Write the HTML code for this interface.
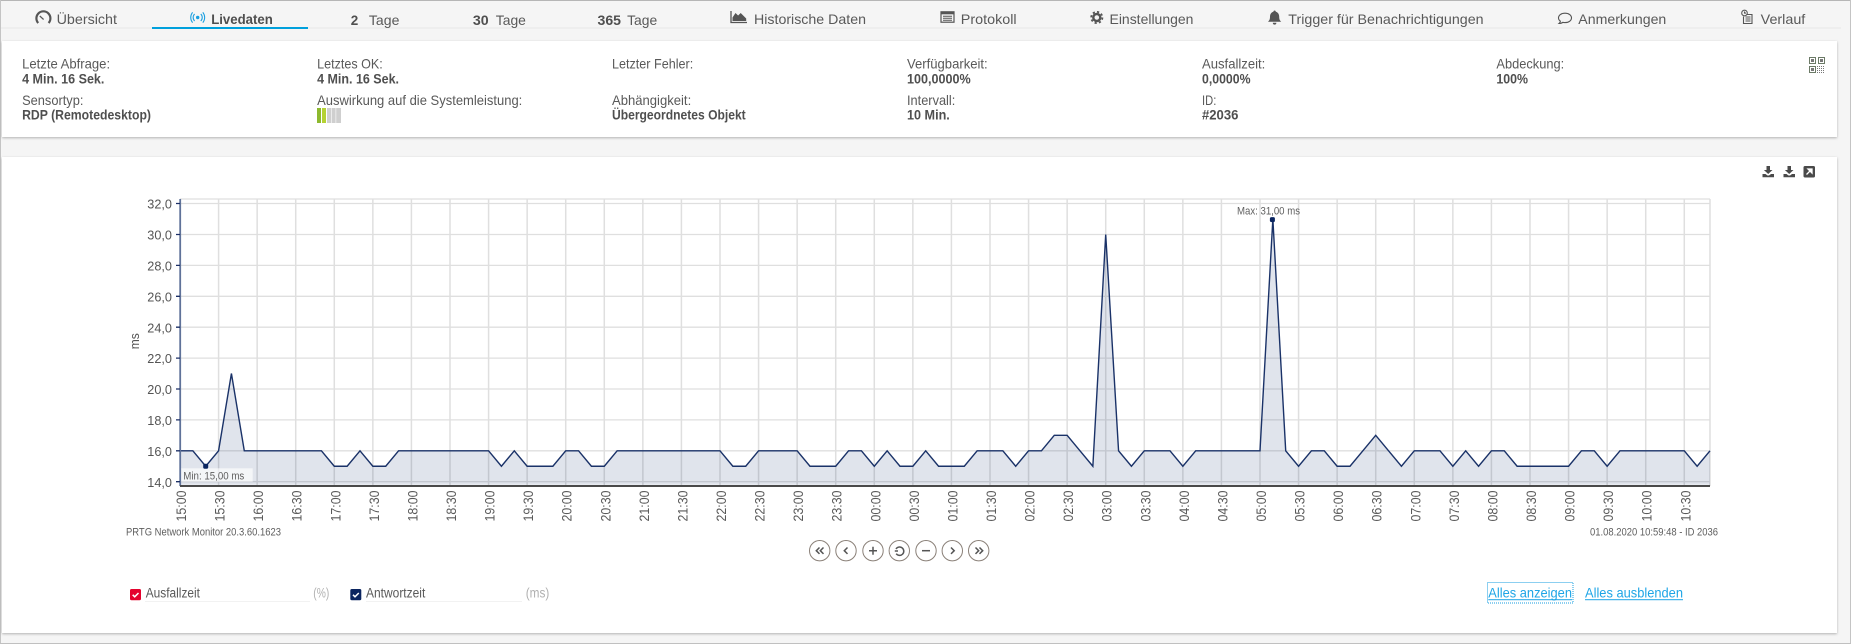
<!DOCTYPE html>
<html lang="de">
<head>
<meta charset="utf-8">
<title>Livedaten</title>
<style>
html,body{margin:0;padding:0;background:#f5f5f5;width:1851px;height:644px;overflow:hidden}
svg{display:block}
text{font-family:"Liberation Sans",sans-serif;font-size:14px;fill:#595959}
.b{font-weight:bold;fill:#4f4f4f}
.c{font-size:13.5px;fill:#5a5a5a}
.y{font-size:12.8px;fill:#555}
.s{font-size:11px;fill:#5f5f5f}
.l{fill:#1ea5e6}
.g{fill:#b0b0b0}
</style>
</head>
<body>
<svg xmlns="http://www.w3.org/2000/svg" width="1851" height="644" viewBox="0 0 1851 644">
<defs>
<filter id="sh" x="-2%" y="-5%" width="104%" height="110%"><feDropShadow dx="0" dy="1" stdDeviation="1.2" flood-color="#000" flood-opacity=".28"/></filter>
</defs>
<rect width="1851" height="644" fill="#f5f5f5"/>
<rect x="0" y="0" width="1851" height="1" fill="#b6b6b6"/>
<rect x="0" y="0" width="1" height="644" fill="#c4c4c4"/>
<rect x="1850" y="0" width="1" height="644" fill="#c4c4c4"/>
<rect x="0" y="643" width="1851" height="1" fill="#c0c0c0"/>

<!-- tabs -->
<rect x="1" y="27" width="1840" height="2" fill="#eeeeee"/>
<rect x="152" y="27" width="156" height="2" fill="#00a0dc"/>
<g>
<text x="56.6" y="24" textLength="60.4" lengthAdjust="spacingAndGlyphs">Übersicht</text>
<text class="b" x="211.2" y="24" textLength="61.6" lengthAdjust="spacingAndGlyphs">Livedaten</text>
<text class="b" x="350.7" y="25" textLength="7.5" lengthAdjust="spacingAndGlyphs">2</text>
<text x="368.9" y="25" textLength="30.5" lengthAdjust="spacingAndGlyphs">Tage</text>
<text class="b" x="472.9" y="25" textLength="15.8" lengthAdjust="spacingAndGlyphs">30</text>
<text x="495.8" y="25" textLength="30.1" lengthAdjust="spacingAndGlyphs">Tage</text>
<text class="b" x="597.5" y="25" textLength="23.5" lengthAdjust="spacingAndGlyphs">365</text>
<text x="627.1" y="25" textLength="30.1" lengthAdjust="spacingAndGlyphs">Tage</text>
<text x="754" y="24" textLength="112" lengthAdjust="spacingAndGlyphs">Historische Daten</text>
<text x="960.8" y="24" textLength="55.8" lengthAdjust="spacingAndGlyphs">Protokoll</text>
<text x="1109.5" y="24" textLength="83.9" lengthAdjust="spacingAndGlyphs">Einstellungen</text>
<text x="1288.3" y="24" textLength="195.3" lengthAdjust="spacingAndGlyphs">Trigger für Benachrichtigungen</text>
<text x="1578.3" y="24" textLength="88" lengthAdjust="spacingAndGlyphs">Anmerkungen</text>
<text x="1760.7" y="24" textLength="44.6" lengthAdjust="spacingAndGlyphs">Verlauf</text>
</g>

<!-- tab icons -->
<g fill="none" stroke="#555">
<path d="M38.2 23a7 7 0 1 1 10.4 0" stroke-width="2.2"/>
<path d="M43.6 19.5L39.8 16" stroke-width="1.2"/>
</g>
<g fill="none" stroke="#1a9fe0" stroke-width="1.1">
<circle cx="197.7" cy="17.5" r="1.7" fill="#1a9fe0" stroke="none"/>
<path d="M194.6 14a5 5 0 0 0 0 7M200.8 14a5 5 0 0 1 0 7"/>
<path d="M192.6 12.4a8 8 0 0 0 0 10.2M202.8 12.4a8 8 0 0 1 0 10.2"/>
</g>
<path d="M731 11v11.5h16" fill="none" stroke="#555" stroke-width="1.3"/>
<path d="M732.5 21v-3.5l3-4.5 2.6 2.5 2.6-2.5 3 3 2.5 2.5V21z" fill="#555"/>
<g>
<rect x="941" y="11.8" width="13" height="10.4" fill="none" stroke="#555" stroke-width="1.2"/>
<rect x="941" y="11.8" width="13" height="2.5" fill="#555"/>
<path d="M943 16.2h9M943 18.2h9M943 20.2h9" stroke="#555" stroke-width="1"/>
</g>
<g>
<circle cx="1096.8" cy="17.5" r="5.6" fill="none" stroke="#555" stroke-width="1.8" stroke-dasharray="2.2 2.2"/>
<circle cx="1096.8" cy="17.5" r="3.5" fill="none" stroke="#555" stroke-width="2.4"/>
</g>
<path d="M1274.6 10.5c.7 0 1.2.5 1.2 1.2 2.4.6 3.4 2.7 3.4 5 0 2.5.6 3.7 2 5H1268c1.4-1.3 2-2.500 2-5 0-2.300 1-4.400 3.400-5 0-.7.500-1.200 1.200-1.200zM1272.800 22.800h3.600a1.800 1.800 0 0 1-3.600 0z" fill="#555"/>
<path d="M1565 13.200c3.700 0 6.500 2 6.500 4.700s-2.800 4.700-6.500 4.700c-.8 0-1.500-.1-2.200-.3-.9.8-2.200 1.200-3.800 1.200.8-.7 1.300-1.500 1.400-2.300-1.200-.8-1.900-2-1.900-3.300 0-2.700 2.800-4.700 6.500-4.700z" fill="none" stroke="#555" stroke-width="1.1"/>
<g fill="none" stroke="#555" stroke-width="1.1">
<path d="M1744.500 14.500h7.500v9h-8.500v-7"/>
<circle cx="1744.500" cy="13" r="2.800" fill="#f5f5f5"/>
<path d="M1744.500 11.500v1.600h1.500M1745.500 17h5M1745.500 19h5M1745.500 21h5"/>
</g>

<!-- info panel -->
<rect x="2" y="41" width="1835" height="96" fill="#fff" filter="url(#sh)"/>
<text x="22.1" y="68.600" textLength="88" lengthAdjust="spacingAndGlyphs">Letzte Abfrage:</text>
<text class="b" x="22.1" y="83.7" textLength="82.3" lengthAdjust="spacingAndGlyphs">4 Min. 16 Sek.</text>
<text x="22.1" y="104.900" textLength="61.3" lengthAdjust="spacingAndGlyphs">Sensortyp:</text>
<text class="b" x="22.1" y="119.7" textLength="128.9" lengthAdjust="spacingAndGlyphs">RDP (Remotedesktop)</text>
<text x="317.100" y="68.600" textLength="65.700" lengthAdjust="spacingAndGlyphs">Letztes OK:</text>
<text class="b" x="317.100" y="83.7" textLength="81.900" lengthAdjust="spacingAndGlyphs">4 Min. 16 Sek.</text>
<text x="317.100" y="104.900" textLength="205.200" lengthAdjust="spacingAndGlyphs">Auswirkung auf die Systemleistung:</text>
<rect x="317" y="108" width="4" height="15" fill="#8db92e"/>
<rect x="322" y="108" width="4" height="15" fill="#b5d233"/>
<rect x="327" y="108" width="4" height="15" fill="#cfcfcf"/>
<rect x="331.600" y="108" width="4" height="15" fill="#cfcfcf"/>
<rect x="336.200" y="108" width="4.800" height="15" fill="#cfcfcf"/>
<text x="612" y="68.600" textLength="81.200" lengthAdjust="spacingAndGlyphs">Letzter Fehler:</text>
<text x="612" y="104.900" textLength="79.200" lengthAdjust="spacingAndGlyphs">Abhängigkeit:</text>
<text class="b" x="612" y="119.7" textLength="133.700" lengthAdjust="spacingAndGlyphs">Übergeordnetes Objekt</text>
<text x="907" y="68.600" textLength="80.700" lengthAdjust="spacingAndGlyphs">Verfügbarkeit:</text>
<text class="b" x="907" y="83.7" textLength="63.700" lengthAdjust="spacingAndGlyphs">100,0000%</text>
<text x="907" y="104.900" textLength="48.300" lengthAdjust="spacingAndGlyphs">Intervall:</text>
<text class="b" x="907" y="119.7" textLength="42.800" lengthAdjust="spacingAndGlyphs">10 Min.</text>
<text x="1202" y="68.600" textLength="63.300" lengthAdjust="spacingAndGlyphs">Ausfallzeit:</text>
<text class="b" x="1202" y="83.7" textLength="48.500" lengthAdjust="spacingAndGlyphs">0,0000%</text>
<text x="1202" y="104.900" textLength="14.300" lengthAdjust="spacingAndGlyphs">ID:</text>
<text class="b" x="1202" y="119.7" textLength="36.400" lengthAdjust="spacingAndGlyphs">#2036</text>
<text x="1496.400" y="68.600" textLength="67.800" lengthAdjust="spacingAndGlyphs">Abdeckung:</text>
<text class="b" x="1496.400" y="83.7" textLength="31.600" lengthAdjust="spacingAndGlyphs">100%</text>
<!-- QR -->
<g fill="none" stroke="#6b7a66" stroke-width="1">
<rect x="1809.500" y="57.500" width="6" height="6"/>
<rect x="1818.500" y="57.500" width="6" height="6"/>
<rect x="1809.500" y="66.500" width="6" height="6"/>
<path d="M1817 66.500h8M1817 68.500h8M1817 70.500h8M1817 72.500h8" stroke="#777" stroke-dasharray="1 1"/>
</g>
<g fill="#777"><rect x="1811" y="59" width="3" height="3"/><rect x="1820" y="59" width="3" height="3"/><rect x="1811" y="68" width="3" height="3"/></g>

<!-- chart panel -->
<rect x="2" y="157" width="1835" height="476" fill="#fff" filter="url(#sh)"/>
<g fill="#4a4a4a">
<path d="M1766.500 166h3.500v4h2.500l-4.300 4-4.300-4h2.600z"/><path d="M1762.500 174h3l2 1.500h1.500l2-1.500h3v3.200h-11.500z"/>
<path d="M1787.500 166h3.500v4h2.500l-4.300 4-4.300-4h2.600z"/><path d="M1783.500 174h3l2 1.500h1.500l2-1.500h3v3.200h-11.500z"/>
<rect x="1803.500" y="166" width="11.500" height="11.500" rx="1.500"/>
</g>
<path d="M1806.500 174.500l5-5M1808 169h4v4z" stroke="#fff" stroke-width="1.300" fill="#fff"/>

<!-- grid -->
<g stroke="#dfdfdf" stroke-width="1.300">
<path d="M180 199H1710" stroke="#e8e8e8" stroke-width="1.800"/>
<path d="M180 203.500H1710M180 234.500H1710M180 265.400H1710M180 296.300H1710M180 327.200H1710M180 358.100H1710M180 389H1710M180 419.900H1710M180 450.800H1710M180 481.700H1710"/>
<g transform="translate(180,0) scale(12.8571,1)">
<path vector-effect="non-scaling-stroke" d="M3 199V486M6 199V486M9 199V486M12 199V486M15 199V486M18 199V486M21 199V486M24 199V486M27 199V486M30 199V486M33 199V486M36 199V486M39 199V486M42 199V486M45 199V486M48 199V486M51 199V486M54 199V486M57 199V486M60 199V486M63 199V486M66 199V486M69 199V486M72 199V486M75 199V486M78 199V486M81 199V486M84 199V486M87 199V486M90 199V486M93 199V486M96 199V486M99 199V486M102 199V486M105 199V486M108 199V486M111 199V486M114 199V486M117 199V486M119 199V486" stroke-width="1.500"/>
</g>
</g>

<!-- series -->
<g transform="translate(180,698) scale(12.8571,-15.45)">
<polygon fill="#002060" fill-opacity=".12" points="0,13.8 0,16 1,16 2,15 3,16 4,21 5,16 11,16 12,15 13,15 14,16 15,15 16,15 17,16 24,16 25,15 26,16 27,15 29,15 30,16 31,16 32,15 33,15 34,16 42,16 43,15 44,15 45,16 48,16 49,15 51,15 52,16 53,16 54,15 55,16 56,15 57,15 58,16 59,15 61,15 62,16 64,16 65,15 66,16 67,16 68,17 69,17 70,16 71,15 72,30 73,16 74,15 75,16 77,16 78,15 79,16 84,16 85,31 86,16 87,15 88,16 89,16 90,15 91,15 92,16 93,17 94,16 95,15 96,16 98,16 99,15 100,16 101,15 102,16 103,16 104,15 108,15 109,16 110,16 111,15 112,16 117,16 118,15 119,16 119,13.8"/>
<polyline fill="none" stroke="#1a3268" stroke-width="1.400" vector-effect="non-scaling-stroke" points="0,16 1,16 2,15 3,16 4,21 5,16 11,16 12,15 13,15 14,16 15,15 16,15 17,16 24,16 25,15 26,16 27,15 29,15 30,16 31,16 32,15 33,15 34,16 42,16 43,15 44,15 45,16 48,16 49,15 51,15 52,16 53,16 54,15 55,16 56,15 57,15 58,16 59,15 61,15 62,16 64,16 65,15 66,16 67,16 68,17 69,17 70,16 71,15 72,30 73,16 74,15 75,16 77,16 78,15 79,16 84,16 85,31 86,16 87,15 88,16 89,16 90,15 91,15 92,16 93,17 94,16 95,15 96,16 98,16 99,15 100,16 101,15 102,16 103,16 104,15 108,15 109,16 110,16 111,15 112,16 117,16 118,15 119,16"/>
</g>
<rect x="180" y="468.300" width="72.700" height="13.400" fill="#fff" fill-opacity=".65"/>
<rect x="179.300" y="199" width="1.800" height="287" fill="#5f7299"/>
<rect x="180" y="485" width="1530" height="2" fill="#4a4a4a"/>
<g stroke="#1b2f66" stroke-width="1.300">
<path d="M176 203.500h4M176 234.500h4M176 265.400h4M176 296.300h4M176 327.200h4M176 358.100h4M176 389h4M176 419.900h4M176 450.800h4M176 481.700h4"/>
</g>
<rect x="203.200" y="463.800" width="5" height="5" rx="1.500" fill="#0a2560"/>
<rect x="1269.900" y="217.100" width="5" height="5" rx="1.500" fill="#0a2560"/>
<text class="s" x="183.300" y="479.300" textLength="61" lengthAdjust="spacingAndGlyphs">Min: 15,00 ms</text>
<text class="s" x="1237" y="214.700" textLength="63" lengthAdjust="spacingAndGlyphs">Max: 31,00 ms</text>

<!-- y labels -->
<g>
<text class="y" x="147.300" y="208.700" textLength="24.700" lengthAdjust="spacingAndGlyphs">32,0</text>
<text class="y" x="147.300" y="239.600" textLength="24.700" lengthAdjust="spacingAndGlyphs">30,0</text>
<text class="y" x="147.300" y="270.500" textLength="24.700" lengthAdjust="spacingAndGlyphs">28,0</text>
<text class="y" x="147.300" y="301.400" textLength="24.700" lengthAdjust="spacingAndGlyphs">26,0</text>
<text class="y" x="147.300" y="332.300" textLength="24.700" lengthAdjust="spacingAndGlyphs">24,0</text>
<text class="y" x="147.300" y="363.200" textLength="24.700" lengthAdjust="spacingAndGlyphs">22,0</text>
<text class="y" x="147.300" y="394.100" textLength="24.700" lengthAdjust="spacingAndGlyphs">20,0</text>
<text class="y" x="147.300" y="425" textLength="24.700" lengthAdjust="spacingAndGlyphs">18,0</text>
<text class="y" x="147.300" y="455.900" textLength="24.700" lengthAdjust="spacingAndGlyphs">16,0</text>
<text class="y" x="147.300" y="486.800" textLength="24.700" lengthAdjust="spacingAndGlyphs">14,0</text>
</g>
<text class="y" transform="translate(139,349.300) rotate(-90)" x="0" y="0" textLength="16" lengthAdjust="spacingAndGlyphs">ms</text>

<!-- x labels -->
<g>
<text class="c" transform="translate(186,521.500) rotate(-90)" textLength="31" lengthAdjust="spacingAndGlyphs">15:00</text>
<text class="c" transform="translate(224.600,521.500) rotate(-90)" textLength="31" lengthAdjust="spacingAndGlyphs">15:30</text>
<text class="c" transform="translate(263.100,521.500) rotate(-90)" textLength="31" lengthAdjust="spacingAndGlyphs">16:00</text>
<text class="c" transform="translate(301.700,521.500) rotate(-90)" textLength="31" lengthAdjust="spacingAndGlyphs">16:30</text>
<text class="c" transform="translate(340.300,521.500) rotate(-90)" textLength="31" lengthAdjust="spacingAndGlyphs">17:00</text>
<text class="c" transform="translate(378.900,521.500) rotate(-90)" textLength="31" lengthAdjust="spacingAndGlyphs">17:30</text>
<text class="c" transform="translate(417.400,521.500) rotate(-90)" textLength="31" lengthAdjust="spacingAndGlyphs">18:00</text>
<text class="c" transform="translate(456,521.500) rotate(-90)" textLength="31" lengthAdjust="spacingAndGlyphs">18:30</text>
<text class="c" transform="translate(494.600,521.500) rotate(-90)" textLength="31" lengthAdjust="spacingAndGlyphs">19:00</text>
<text class="c" transform="translate(533.100,521.500) rotate(-90)" textLength="31" lengthAdjust="spacingAndGlyphs">19:30</text>
<text class="c" transform="translate(571.700,521.500) rotate(-90)" textLength="31" lengthAdjust="spacingAndGlyphs">20:00</text>
<text class="c" transform="translate(610.300,521.500) rotate(-90)" textLength="31" lengthAdjust="spacingAndGlyphs">20:30</text>
<text class="c" transform="translate(648.900,521.500) rotate(-90)" textLength="31" lengthAdjust="spacingAndGlyphs">21:00</text>
<text class="c" transform="translate(687.400,521.500) rotate(-90)" textLength="31" lengthAdjust="spacingAndGlyphs">21:30</text>
<text class="c" transform="translate(726,521.500) rotate(-90)" textLength="31" lengthAdjust="spacingAndGlyphs">22:00</text>
<text class="c" transform="translate(764.600,521.500) rotate(-90)" textLength="31" lengthAdjust="spacingAndGlyphs">22:30</text>
<text class="c" transform="translate(803.100,521.500) rotate(-90)" textLength="31" lengthAdjust="spacingAndGlyphs">23:00</text>
<text class="c" transform="translate(841.700,521.500) rotate(-90)" textLength="31" lengthAdjust="spacingAndGlyphs">23:30</text>
<text class="c" transform="translate(880.300,521.500) rotate(-90)" textLength="31" lengthAdjust="spacingAndGlyphs">00:00</text>
<text class="c" transform="translate(918.900,521.500) rotate(-90)" textLength="31" lengthAdjust="spacingAndGlyphs">00:30</text>
<text class="c" transform="translate(957.400,521.500) rotate(-90)" textLength="31" lengthAdjust="spacingAndGlyphs">01:00</text>
<text class="c" transform="translate(996,521.500) rotate(-90)" textLength="31" lengthAdjust="spacingAndGlyphs">01:30</text>
<text class="c" transform="translate(1034.600,521.500) rotate(-90)" textLength="31" lengthAdjust="spacingAndGlyphs">02:00</text>
<text class="c" transform="translate(1073.100,521.500) rotate(-90)" textLength="31" lengthAdjust="spacingAndGlyphs">02:30</text>
<text class="c" transform="translate(1111.700,521.500) rotate(-90)" textLength="31" lengthAdjust="spacingAndGlyphs">03:00</text>
<text class="c" transform="translate(1150.300,521.500) rotate(-90)" textLength="31" lengthAdjust="spacingAndGlyphs">03:30</text>
<text class="c" transform="translate(1188.900,521.500) rotate(-90)" textLength="31" lengthAdjust="spacingAndGlyphs">04:00</text>
<text class="c" transform="translate(1227.400,521.500) rotate(-90)" textLength="31" lengthAdjust="spacingAndGlyphs">04:30</text>
<text class="c" transform="translate(1266,521.500) rotate(-90)" textLength="31" lengthAdjust="spacingAndGlyphs">05:00</text>
<text class="c" transform="translate(1304.600,521.500) rotate(-90)" textLength="31" lengthAdjust="spacingAndGlyphs">05:30</text>
<text class="c" transform="translate(1343.100,521.500) rotate(-90)" textLength="31" lengthAdjust="spacingAndGlyphs">06:00</text>
<text class="c" transform="translate(1381.700,521.500) rotate(-90)" textLength="31" lengthAdjust="spacingAndGlyphs">06:30</text>
<text class="c" transform="translate(1420.300,521.500) rotate(-90)" textLength="31" lengthAdjust="spacingAndGlyphs">07:00</text>
<text class="c" transform="translate(1458.900,521.500) rotate(-90)" textLength="31" lengthAdjust="spacingAndGlyphs">07:30</text>
<text class="c" transform="translate(1497.400,521.500) rotate(-90)" textLength="31" lengthAdjust="spacingAndGlyphs">08:00</text>
<text class="c" transform="translate(1536,521.500) rotate(-90)" textLength="31" lengthAdjust="spacingAndGlyphs">08:30</text>
<text class="c" transform="translate(1574.600,521.500) rotate(-90)" textLength="31" lengthAdjust="spacingAndGlyphs">09:00</text>
<text class="c" transform="translate(1613.100,521.500) rotate(-90)" textLength="31" lengthAdjust="spacingAndGlyphs">09:30</text>
<text class="c" transform="translate(1651.700,521.500) rotate(-90)" textLength="31" lengthAdjust="spacingAndGlyphs">10:00</text>
<text class="c" transform="translate(1690.300,521.500) rotate(-90)" textLength="31" lengthAdjust="spacingAndGlyphs">10:30</text>
</g>

<text class="s" x="126" y="535.700" textLength="155" lengthAdjust="spacingAndGlyphs">PRTG Network Monitor 20.3.60.1623</text>
<text class="s" x="1590" y="535.700" textLength="128" lengthAdjust="spacingAndGlyphs">01.08.2020 10:59:48 - ID 2036</text>

<!-- chart nav buttons -->
<g fill="#fff" stroke="#8a8078" stroke-width="1">
<circle cx="819.700" cy="550.700" r="10.200"/>
<circle cx="846" cy="550.700" r="10.200"/>
<circle cx="873" cy="550.700" r="10.200"/>
<circle cx="899.300" cy="550.700" r="10.200"/>
<circle cx="926" cy="550.700" r="10.200"/>
<circle cx="952.300" cy="550.700" r="10.200"/>
<circle cx="978.700" cy="550.700" r="10.200"/>
</g>
<g fill="none" stroke="#555" stroke-width="1.500">
<path d="M819.500 547.500l-3.200 3.200 3.200 3.200M823.500 547.500l-3.200 3.200 3.200 3.200"/>
<path d="M847.500 547.500l-3.200 3.200 3.200 3.200"/>
<path d="M873 546.700v8M869 550.700h8"/>
<path d="M896 549a4.200 4.200 0 1 1 .2 4.700M894.800 551h3.200"/>
<path d="M922 550.700h8"/>
<path d="M951 547.500l3.200 3.200-3.200 3.200"/>
<path d="M975.500 547.500l3.200 3.200-3.200 3.200M979.500 547.500l3.200 3.200-3.200 3.200"/>
</g>

<!-- legend -->
<rect x="130" y="589" width="11" height="11.300" rx="1.500" fill="#e4032e"/>
<path d="M132.700 594.800l2 2 3.800-3.800" fill="none" stroke="#fff" stroke-width="1.500"/>
<text x="145.700" y="597.700" textLength="54.300" lengthAdjust="spacingAndGlyphs" style="font-size:13.500px">Ausfallzeit</text>
<rect x="145" y="601" width="165" height="1" fill="#f2f2f2"/>
<text class="g" x="313.300" y="597.700" textLength="16" lengthAdjust="spacingAndGlyphs" style="font-size:13.500px">(%)</text>
<rect x="350.300" y="589" width="11" height="11.300" rx="1.500" fill="#0b2560"/>
<path d="M353 594.800l2 2 3.800-3.800" fill="none" stroke="#fff" stroke-width="1.500"/>
<text x="366" y="597.700" textLength="59.300" lengthAdjust="spacingAndGlyphs" style="font-size:13.500px">Antwortzeit</text>
<rect x="366" y="601" width="156" height="1" fill="#f2f2f2"/>
<text class="g" x="525.700" y="597.700" textLength="23.600" lengthAdjust="spacingAndGlyphs" style="font-size:13.500px">(ms)</text>

<!-- links -->
<rect x="1487.500" y="582.500" width="85.500" height="20.500" fill="none" stroke="#1a9fe0" stroke-width="1" stroke-dasharray="1 1"/>
<text class="l" x="1488.300" y="597.700" textLength="83.700" lengthAdjust="spacingAndGlyphs">Alles anzeigen</text>
<rect x="1488.300" y="599.200" width="83.700" height="1" fill="#1ea5e6"/>
<text class="l" x="1585" y="597.700" textLength="98" lengthAdjust="spacingAndGlyphs">Alles ausblenden</text>
<rect x="1585" y="599.200" width="98" height="1" fill="#1ea5e6"/>
</svg>
</body>
</html>
